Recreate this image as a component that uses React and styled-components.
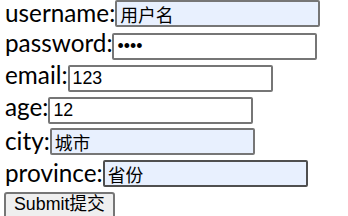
import styled, { createGlobalStyle } from "styled-components";

const GlobalStyle = createGlobalStyle`
  html, body {
    margin: 0;
    padding: 0;
    background: #ffffff;
    overflow: hidden;
  }
  body {
    font-family: Lato, "Noto Sans", sans-serif;
    color: #000000;
  }
`;

const Form = styled.form`
  display: flex;
  flex-direction: column;
  gap: 5px;
  padding: 0 0 0 5px;
`;

const Row = styled.div`
  display: flex;
  align-items: baseline;
  height: 27px;
`;

const Label = styled.label`
  font-family: Lato, "Noto Sans", sans-serif;
  font-size: 24.3px;
  line-height: 21px;
  white-space: nowrap;
`;

const Field = styled.input`
  box-sizing: border-box;
  width: 205px;
  height: 27px;
  margin: 0;
  padding: 1px 3px;
  border: 2px solid ${(p) => (p.$hover ? "#4f4f4f" : "#767676")};
  border-radius: 2px;
  background: ${(p) => (p.$filled ? "#e8f0fe" : "#ffffff")};
  font-family: "Liberation Sans", "Noto Sans CJK SC", sans-serif;
  font-size: 17.8px;
  color: #000000;
  outline: none;
`;

const SubmitButton = styled.button`
  align-self: flex-start;
  box-sizing: border-box;
  height: 32px;
  margin: 0 0 0 -1px;
  padding: 0 8px 8px;
  border: 2px solid #767676;
  border-radius: 3px;
  background: #efefef;
  font-family: "Liberation Sans", "Noto Sans CJK SC", sans-serif;
  font-size: 17.8px;
  line-height: 20px;
  color: #000000;
`;

export default function App() {
    const fields = [
        { name: "username", type: "text", value: "用户名", filled: true },
        { name: "password", type: "password", value: "1234" },
        { name: "email", type: "text", value: "123" },
        { name: "age", type: "text", value: "12" },
        { name: "city", type: "text", value: "城市", filled: true },
        { name: "province", type: "text", value: "省份", filled: true, hover: true },
    ];
    return (
        <>
            <GlobalStyle />
            <Form onSubmit={(e) => e.preventDefault()}>
                {fields.map(({ name, type, value, filled, hover }) => (
                    <Row key={name}>
                        <Label htmlFor={name}>{name}:</Label>
                        <Field
                            id={name}
                            name={name}
                            type={type}
                            defaultValue={value}
                            $filled={filled}
                            $hover={hover}
                        />
                    </Row>
                ))}
                <SubmitButton type="submit">Submit提交</SubmitButton>
            </Form>
        </>
    );
}
